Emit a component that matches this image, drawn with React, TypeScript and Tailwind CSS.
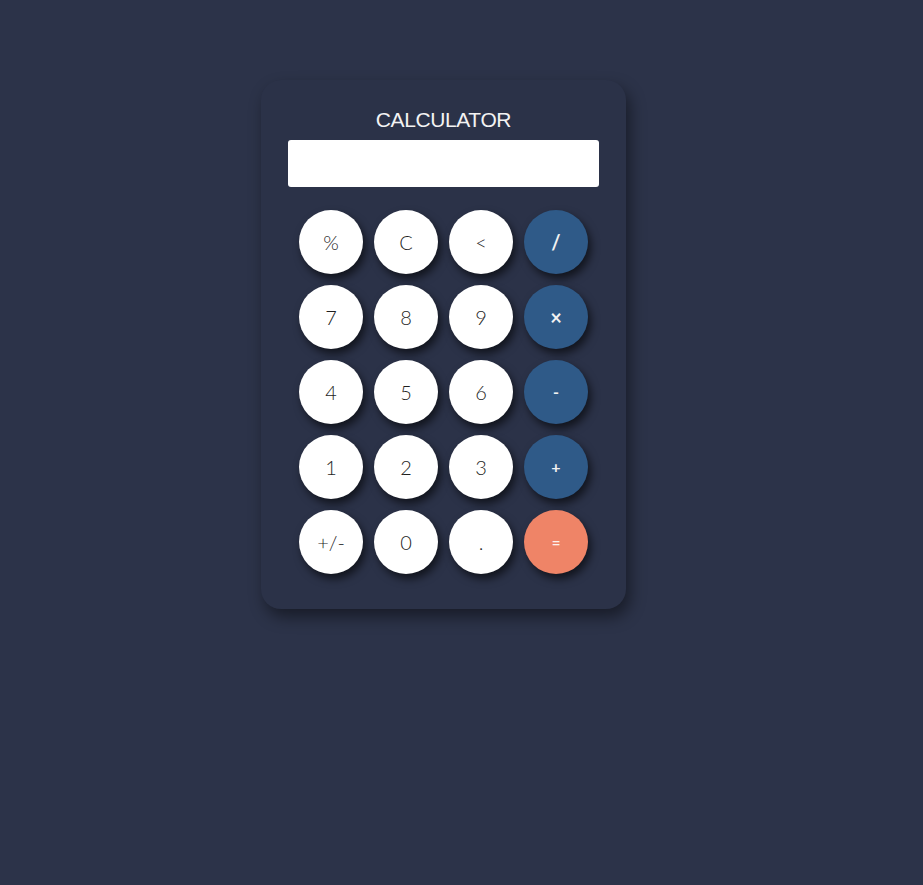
import React from "react";

type Key = { label: string; kind: "w" | "b" | "s" | "o" };

const keys: Key[] = [
  { label: "%", kind: "w" },
  { label: "C", kind: "w" },
  { label: "<", kind: "w" },
  { label: "/", kind: "b" },
  { label: "7", kind: "w" },
  { label: "8", kind: "w" },
  { label: "9", kind: "w" },
  { label: "×", kind: "b" },
  { label: "4", kind: "w" },
  { label: "5", kind: "w" },
  { label: "6", kind: "w" },
  { label: "-", kind: "s" },
  { label: "1", kind: "w" },
  { label: "2", kind: "w" },
  { label: "3", kind: "w" },
  { label: "+", kind: "s" },
  { label: "+/-", kind: "w" },
  { label: "0", kind: "w" },
  { label: ".", kind: "w" },
  { label: "=", kind: "o" },
];

function cls(kind: Key["kind"]) {
  switch (kind) {
    case "w":
      return "bg-white text-[20px] font-light text-[#1f1f1f]";
    case "b":
      return "bg-[#2f5a88] text-[20px] font-bold text-[#f2f2f2]";
    case "s":
      return "bg-[#2f5a88] text-[16px] font-bold text-[#f2f2f2]";
    default:
      return "bg-[#ef8467] text-[15px] font-bold text-[#fdf1ec]";
  }
}

export default function App() {
  return (
    <div className="min-h-[885px] w-full bg-[#2c3349] pt-[80px] font-['Lato','Liberation_Sans',sans-serif]">
      <div className="ml-[261px] flex h-[529px] w-[365px] flex-col items-center rounded-[20px] bg-[#2b3248] shadow-[4px_8px_16px_rgba(0,0,0,0.45)]">
        <h1 className="mt-[27px] text-[21px] leading-[26px] tracking-[-0.4px] text-[#f3f3f3] font-['Liberation_Sans',sans-serif]">
          CALCULATOR
        </h1>
        <div className="mt-[7px] h-[47px] w-[311px] rounded-[3px] bg-white" />
        <div className="mt-[23px] grid grid-cols-[repeat(4,64px)] gap-[11px]">
          {keys.map((k) => (
            <button
              key={k.label}
              className={
                "flex h-[64px] w-[64px] items-center justify-center rounded-full shadow-[3px_5px_8px_rgba(0,0,0,0.6)] " +
                cls(k.kind)
              }
            >
              {k.label}
            </button>
          ))}
        </div>
      </div>
    </div>
  );
}
